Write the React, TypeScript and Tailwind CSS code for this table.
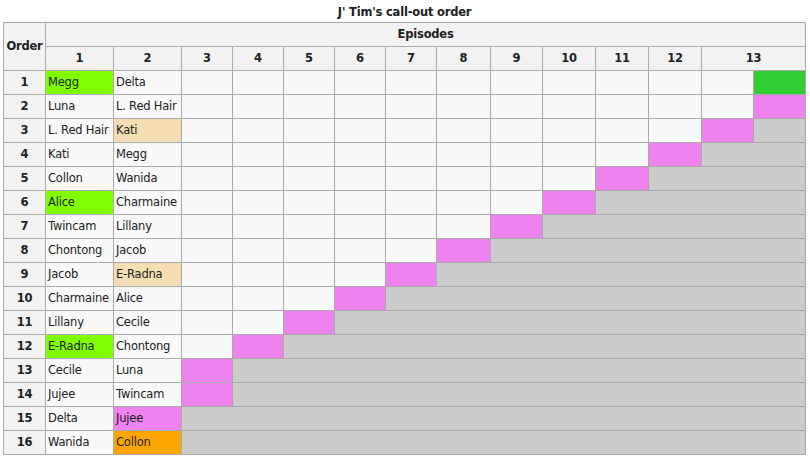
const rows: [string, string, string, string][] = [
  // name ep1, bg ep1, name ep2, bg ep2
  ["Megg", "bg-[#7fff00]", "Delta", ""],
  ["Luna", "", "L. Red Hair", ""],
  ["L. Red Hair", "", "Kati", "bg-[#f5deb3]"],
  ["Kati", "", "Megg", ""],
  ["Collon", "", "Wanida", ""],
  ["Alice", "bg-[#7fff00]", "Charmaine", ""],
  ["Twincam", "", "Lillany", ""],
  ["Chontong", "", "Jacob", ""],
  ["Jacob", "", "E-Radna", "bg-[#f5deb3]"],
  ["Charmaine", "", "Alice", ""],
  ["Lillany", "", "Cecile", ""],
  ["E-Radna", "bg-[#7fff00]", "Chontong", ""],
  ["Cecile", "", "Luna", ""],
  ["Jujee", "", "Twincam", ""],
  ["Delta", "", "Jujee", "bg-[#ee82ee]"],
  ["Wanida", "", "Collon", "bg-[#ffa500]"],
];

const cell = "border border-[#aaaaaa] h-[23px] p-0";
const head = "border border-[#aaaaaa] bg-[#f2f2f2] font-bold text-[11.5px] tracking-[-0.2px] text-center p-0";

// 12 sub-columns: ep3..ep12, ep13a, ep13b
function EpisodeCells({ order }: { order: number }) {
  if (order === 1 || order === 2) {
    return (
      <>
        {Array.from({ length: 11 }).map((_, i) => (
          <td key={i} className={`${cell} bg-[#f9f9f9]`} />
        ))}
        <td className={`${cell} ${order === 1 ? "bg-[#32cd32]" : "bg-[#ee82ee]"}`} />
      </>
    );
  }
  if (order >= 15) {
    return <td colSpan={12} className={`${cell} bg-[#cccccc]`} />;
  }
  const pink = Math.max(0, 13 - order);
  const rest = 12 - pink - 1;
  return (
    <>
      {Array.from({ length: pink }).map((_, i) => (
        <td key={i} className={`${cell} bg-[#f9f9f9]`} />
      ))}
      <td className={`${cell} bg-[#ee82ee]`} />
      {rest > 0 && <td colSpan={rest} className={`${cell} bg-[#cccccc]`} />}
    </>
  );
}

export default function App() {
  const widths = [42, 68, 68, 51, 51, 51, 51, 51, 54, 52, 53, 53, 53, 52, 52];

  return (
    <div className="bg-white w-[810px] h-[459px] pl-[3px] font-['DejaVu_Sans',sans-serif] text-[#202122]">
      <table className="table-fixed border-collapse w-[803px]">
        <caption className="h-[22px] pt-[2px] leading-[20px] font-bold text-[11.5px] tracking-[-0.2px] text-center">
          J' Tim's call-out order
        </caption>
        <colgroup>
          {widths.map((w, i) => (
            <col key={i} style={{ width: w }} />
          ))}
        </colgroup>
        <thead>
          <tr className="h-[24px]">
            <th rowSpan={2} className={head}>
              Order
            </th>
            <th colSpan={14} className={head}>
              Episodes
            </th>
          </tr>
          <tr className="h-[24px]">
            {Array.from({ length: 12 }).map((_, i) => (
              <th key={i} className={head}>
                {i + 1}
              </th>
            ))}
            <th colSpan={2} className={head}>
              13
            </th>
          </tr>
        </thead>
        <tbody>
          {rows.map(([a, aBg, b, bBg], i) => (
            <tr key={i} className="h-[24px]">
              <td className={`${head} h-[23px]`}>{i + 1}</td>
              <td className={`${cell} ${aBg || "bg-[#f9f9f9]"} text-[11.5px] tracking-[-0.2px] pl-[2px] whitespace-nowrap`}>
                {a}
              </td>
              <td className={`${cell} ${bBg || "bg-[#f9f9f9]"} text-[11.5px] tracking-[-0.2px] pl-[2px] whitespace-nowrap`}>
                {b}
              </td>
              <EpisodeCells order={i + 1} />
            </tr>
          ))}
        </tbody>
      </table>
    </div>
  );
}
